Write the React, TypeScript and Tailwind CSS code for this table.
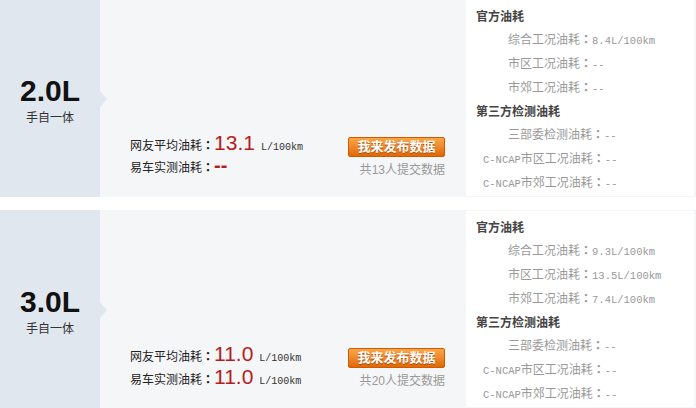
const ROWS = [
  {
    size: '2.0L',
    gear: '手自一体',
    avg: '13.1',
    real: null as string | null,
    count: 13,
    official: ['8.4L/100km', '--', '--'],
  },
  {
    size: '3.0L',
    gear: '手自一体',
    avg: '11.0',
    real: '11.0',
    count: 20,
    official: ['9.3L/100km', '13.5L/100km', '7.4L/100km'],
  },
];

const cjk = "font-['Liberation_Sans','Noto_Sans_CJK_SC',sans-serif]";
const mono = "font-['Liberation_Mono',monospace]";

// full-width colon with the dot centred, as in the original
function Colon() {
  return <span className="inline-block leading-none font-['Noto_Sans_CJK_JP',sans-serif] font-bold">：</span>;
}

function Value({ v }: { v: string | null }) {
  if (!v) {
    return <span className="text-[20px] font-bold leading-none text-[#b71c1c] font-['Liberation_Sans',sans-serif]">--</span>;
  }
  return (
    <>
      <span className="text-[21px] leading-none text-[#b71c1c] font-['Liberation_Sans',sans-serif]">{v}</span>
      <span className={`ml-[6px] text-[10px] text-[#333] ${mono}`}>L/100km</span>
    </>
  );
}

function Row({ r }: { r: (typeof ROWS)[number] }) {
  const small = `text-[10.5px] ${mono}`;
  return (
    <div className={`flex h-[198px] bg-[#f5f6f8] ${cjk}`}>
      {/* left block with arrow */}
      <div className="relative w-[100px] bg-[#e1e7ee] flex flex-col items-center justify-center pt-[6px]">
        <div className="text-[30px] font-bold leading-[32px] text-[#111] font-['Liberation_Sans',sans-serif]">{r.size}</div>
        <div className="mt-[2px] text-[12px] leading-[18px] text-[#333]">{r.gear}</div>
        <span className="absolute right-[-7px] top-[92px] w-0 h-0 border-y-[8px] border-y-transparent border-l-[7px] border-l-[#e1e7ee]" />
      </div>

      {/* middle */}
      <div className="w-[366px] flex items-end justify-between pl-[30px] pr-[21px] pb-[16px]">
        <div className="text-[12px] text-[#222] pb-[3px]">
          <div className="h-[23px] flex items-baseline">
            <span>网友平均油耗<Colon /></span>
            <Value v={r.avg} />
          </div>
          <div className="h-[23px] flex items-baseline">
            <span>易车实测油耗<Colon /></span>
            <Value v={r.real} />
          </div>
        </div>
        <div className="flex flex-col items-end">
          <div className="h-[23px] flex items-center">
            <button className="w-[97px] h-[20px] rounded-[2px] border border-[#cf5a00] bg-gradient-to-b from-[#fba645] to-[#e06800] text-white text-[13px] font-bold leading-none [text-shadow:0_1px_0_#a84600]">
              我来发布数据
            </button>
          </div>
          <div className="h-[23px] flex items-center text-[12px] text-[#999]">共{r.count}人提交数据</div>
        </div>
      </div>

      {/* right */}
      <div className="flex-1 mt-[1px] mb-[1px] mr-[2px] bg-white pt-[6px] pl-[10px] text-[12px] leading-[23px]">
        <div className="font-bold text-[#444]">官方油耗</div>
        <div className="pl-[32px] text-[#999]">综合工况油耗<Colon /><span className={small}>{r.official[0]}</span></div>
        <div className="pl-[32px] text-[#999]">市区工况油耗<Colon /><span className={small}>{r.official[1]}</span></div>
        <div className="pl-[32px] text-[#999]">市郊工况油耗<Colon /><span className={small}>{r.official[2]}</span></div>
        <div className="font-bold text-[#444]">第三方检测油耗</div>
        <div className="pl-[32px] text-[#999]">三部委检测油耗<Colon /><span className={small}>--</span></div>
        <div className="pl-[7px] text-[#999]"><span className={small}>C-NCAP</span>市区工况油耗<Colon /><span className={small}>--</span></div>
        <div className="pl-[7px] text-[#999]"><span className={small}>C-NCAP</span>市郊工况油耗<Colon /><span className={small}>--</span></div>
      </div>
    </div>
  );
}

export default function App() {
  return (
    <div className="w-[696px] h-[408px] overflow-hidden bg-white">
      <div className="-mt-[1px] flex flex-col gap-[13px]">
        {ROWS.map((r) => <Row key={r.size} r={r} />)}
      </div>
    </div>
  );
}
